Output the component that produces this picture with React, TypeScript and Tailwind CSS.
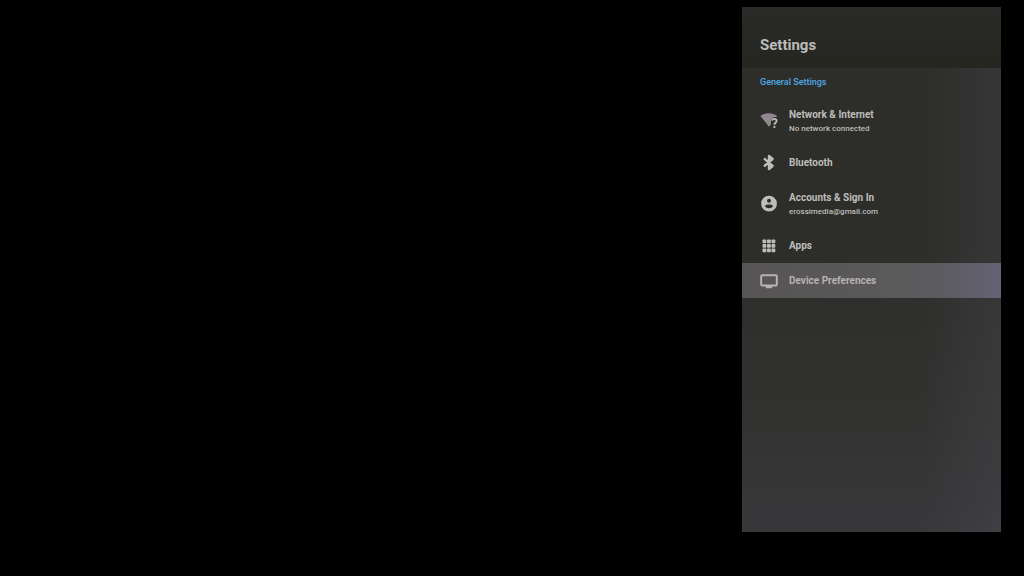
import { ReactNode } from "react"

interface ISettingsItemProps {
  icon: ReactNode
  title: string
  description?: string
  selected?: boolean
}

const WifiUnknownIcon = () => (
  <svg viewBox="0 0 20 20" className="size-5" aria-hidden="true">
    <path
      d="M1.4 5C6 1.3 13.4 1.3 18 5L17.4 6.2C14.6 5.6 12 7.4 12 10.4V13.2L10 15.8Z"
      fill="#8f888f"
    />
    <path
      d="M13.2 9.6C13.4 7.2 17.6 7.2 17.6 9.9C17.6 11.7 15.4 11.8 15.4 13.8"
      fill="none"
      stroke="#bdbdbb"
      strokeWidth="1.8"
    />
    <circle cx="15.4" cy="15.9" r="1.1" fill="#bdbdbb" />
  </svg>
)

const BluetoothIcon = () => (
  <svg viewBox="0 0 20 20" className="size-5" aria-hidden="true">
    <path
      d="M5 5.4L13.6 13L10 16V3L13.6 6L5 13.4"
      fill="none"
      stroke="currentColor"
      strokeWidth="2.4"
      strokeLinejoin="round"
    />
  </svg>
)

const AccountIcon = () => (
  <svg viewBox="0 0 20 20" className="size-5" aria-hidden="true">
    <path
      fillRule="evenodd"
      fill="currentColor"
      d="M10 1.8A7.9 7.9 0 1 0 10 17.6A7.9 7.9 0 1 0 10 1.8ZM10 4.8A2 2 0 1 1 10 8.8A2 2 0 1 1 10 4.8ZM5.8 12.3C6.2 10.9 8.6 10.5 10 10.5S13.8 10.9 14.2 12.3C13.2 13.6 11.8 14.2 10 14.2S6.8 13.6 5.8 12.3Z"
    />
  </svg>
)

const AppsIcon = () => (
  <svg
    viewBox="0 0 20 20"
    className="size-5"
    fill="currentColor"
    aria-hidden="true"
  >
    {[3.5, 8, 12.5].map((y) =>
      [3.5, 8, 12.5].map((x) => (
        <rect key={`${x}-${y}`} x={x} y={y} width="3.8" height="3.8" rx="0.8" />
      ))
    )}
  </svg>
)

const DisplayIcon = () => (
  <svg viewBox="0 0 20 20" className="size-5" aria-hidden="true">
    <rect
      x="2.2"
      y="4.2"
      width="15.6"
      height="10.4"
      rx="1"
      fill="none"
      stroke="currentColor"
      strokeWidth="2"
    />
    <path d="M6.6 15H13.4V16L12.6 17.2H7.4L6.6 16Z" fill="currentColor" />
  </svg>
)

const items: ISettingsItemProps[] = [
  {
    icon: <WifiUnknownIcon />,
    title: "Network & Internet",
    description: "No network connected",
  },
  {
    icon: <BluetoothIcon />,
    title: "Bluetooth",
  },
  {
    icon: <AccountIcon />,
    title: "Accounts & Sign In",
    description: "erossimedia@gmail.com",
  },
  {
    icon: <AppsIcon />,
    title: "Apps",
  },
  {
    icon: <DisplayIcon />,
    title: "Device Preferences",
    selected: true,
  },
]

const SettingsItem = ({
  icon,
  title,
  description,
  selected,
}: ISettingsItemProps) => (
  <li>
    <button
      type="button"
      aria-current={selected}
      className={`flex w-full items-center gap-2.5 px-[17px] text-left ${
        description ? "h-12" : "h-[35px]"
      } ${
        selected
          ? "bg-linear-to-r from-[#565455] from-0% via-[#5c5b5d] via-75% to-[#656275] text-[#b8b1b5]"
          : "text-[#bdbdbb]"
      }`}
    >
      <span className="shrink-0">{icon}</span>
      <span className="flex flex-col">
        <span className="text-[10px] leading-4 font-bold">{title}</span>
        {description && (
          <span className="text-[8px] leading-3 font-medium">
            {description}
          </span>
        )}
      </span>
    </button>
  </li>
)

export default function App() {
  return (
    <main className="flex min-h-screen justify-end bg-black pt-[7px] pr-[23px] pb-11 font-[Roboto,sans-serif]">
      <aside className="w-1/4 min-w-[259px] bg-[linear-gradient(to_right,transparent_70%,rgba(90,90,105,0.2)),linear-gradient(to_bottom,#2d2d2a_45%,#323331_80%,#38383b)]">
        <header className="bg-linear-to-b from-[#2a2a28] to-[#252620] px-[18px] pt-7 pb-[13px]">
          <h1 className="text-[15px] leading-5 font-bold text-[#bdbbbc]">
            Settings
          </h1>
        </header>
        <section>
          <h2 className="px-[18px] pt-2 pb-[9px] text-[9px] leading-3 font-medium text-[#4fa9e6]">
            General Settings
          </h2>
          <ul>
            {items.map((item) => (
              <SettingsItem key={item.title} {...item} />
            ))}
          </ul>
        </section>
      </aside>
    </main>
  )
}
